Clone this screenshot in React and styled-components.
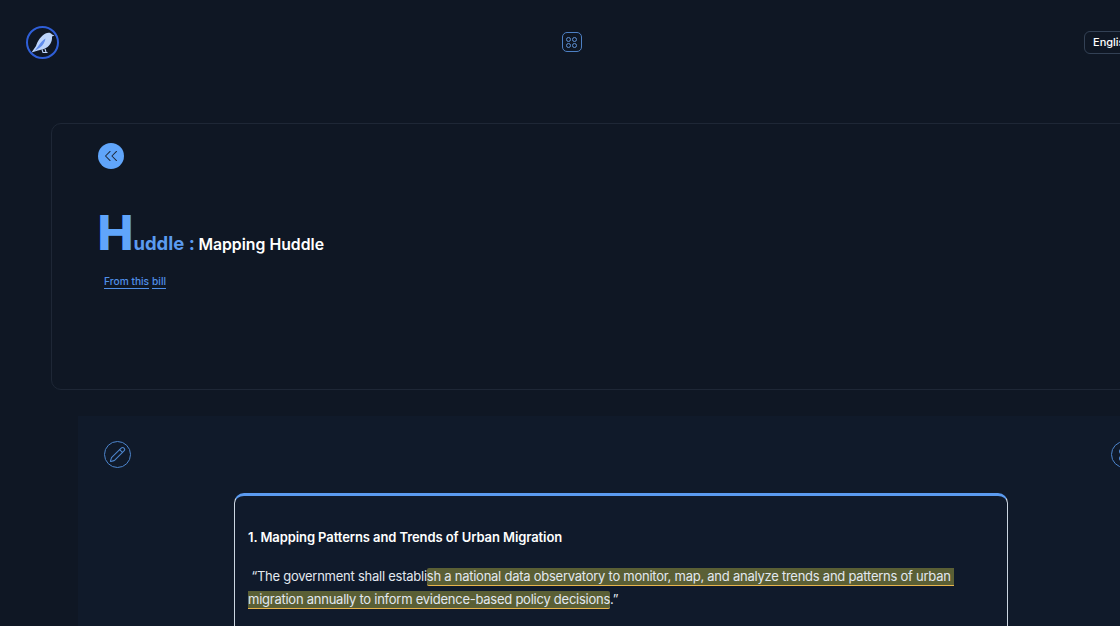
import styled, { createGlobalStyle } from "styled-components";
import { ChevronsLeft, Pencil } from "lucide-react";

const GlobalStyle = createGlobalStyle`
html, body {
  margin: 0;
  height: 100%;
  overflow: hidden;
  background: #0f1724;
}
* {
  box-sizing: border-box;
}
`;

const Page = styled.div`
width: 1242px;
height: 626px;
overflow: hidden;
background: #0f1724;
font-family: Inter, "Liberation Sans", sans-serif;
color: #fff;
`;

const Header = styled.header`
width: 1174px;
height: 84px;
padding: 26px 26px 0;
display: flex;
justify-content: space-between;
align-items: flex-start;
`;

const Logo = styled.svg`
width: 33px;
height: 33px;
display: block;
`;

const AppsButton = styled.div`
width: 20px;
height: 20px;
margin-top: 6px;
border: 1.5px solid #4d80c4;
border-radius: 5px;
display: grid;
grid-template-columns: 5px 5px;
grid-template-rows: 5px 5px;
gap: 1px;
place-content: center;
`;

const AppsDot = styled.span`
border: 1.25px solid #5d8fd3;
border-radius: 50%;
`;

const LangButton = styled.div`
width: 64px;
height: 23px;
margin-top: 5px;
padding-left: 8px;
border: 1px solid #334155;
border-radius: 6px;
font-size: 11px;
font-weight: 500;
line-height: 21px;
white-space: nowrap;
`;

const TopCard = styled.section`
margin: 39px 51px 0;
height: 267px;
padding: 19px 45.5px;
border: 1px solid #1e2736;
border-radius: 10px;
`;

const BackButton = styled.div`
width: 26px;
height: 26px;
border-radius: 50%;
background: #60a5fa;
color: #1e293b;
display: flex;
align-items: center;
justify-content: center;
`;

const Title = styled.h1`
margin: 40px 0 0;
height: 48px;
display: flex;
align-items: baseline;
font-weight: 700;
line-height: 48px;
`;

const BigLetter = styled.span`
font-size: 48px;
font-weight: 800;
color: #60a5fa;
`;

const TitleRest = styled.span`
font-size: 18.5px;
color: #5b9bf0;
margin-right: 3.5px;
`;

const TitleName = styled.span`
font-size: 15.8px;
font-weight: 600;
color: #fff;
`;

const Links = styled.div`
margin: 17px 0 0 6.5px;
display: flex;
gap: 3px;
`;

const BillLink = styled.a`
font-size: 10.2px;
font-weight: 500;
line-height: 14px;
color: #4f8fe8;
border-bottom: 1px solid #4f8fe8;
`;

const Section = styled.section`
margin: 26px 78px 0;
height: 300px;
padding: 25px 26px 0;
background: #101a2a;
`;

const ToolRow = styled.div`
display: flex;
justify-content: space-between;
`;

const RoundIcon = styled.div`
width: 27px;
height: 27px;
border: 1.5px solid #4d85cc;
border-radius: 50%;
color: #4d85cc;
display: flex;
align-items: center;
justify-content: center;
`;

const DotGrid = styled.div`
display: grid;
grid-template-columns: 5px 5px;
grid-template-rows: 5px 5px;
gap: 2px;
`;

const Dot = styled.span`
border-radius: 50%;
background: #4d85cc;
`;

const NoteBox = styled.article`
width: 774px;
height: 300px;
margin: 25px 0 0 130px;
padding: 32px 13px 0 13px;
background: #101a2b;
border: 1px solid #cbd5e1;
border-top: 3px solid #5b9bf0;
border-radius: 10px;
`;

const NoteTitle = styled.h3`
margin: 0;
font-size: 13px;
font-weight: 600;
line-height: 18px;
letter-spacing: -0.09px;
color: #fff;
`;

const NoteText = styled.p`
margin: 19px 0 0;
font-size: 13px;
line-height: 23px;
letter-spacing: -0.25px;
color: #e2e8f0;
`;

const Highlight = styled.mark`
background: #5a5f35;
color: #e2e8f0;
padding-bottom: 1px;
border-bottom: 1.5px solid #e8b44c;
border-radius: 2px;
white-space: break-spaces;
`;

const App = () => {
  return (
    <Page>
      <GlobalStyle />
      <Header>
        <Logo viewBox="0 0 33 33">
          <circle cx="16.5" cy="16.5" r="15.5" fill="#0f1724" stroke="#2f5fd8" strokeWidth="2" />
          <path
            d="M5.5 26.5 L10 20 C11.5 15 15 10 19.5 7.5 C22 6 25 6.5 26 8.5 L28.5 9.5 L26 10.5 C26.5 16 23.5 21 18 23 L12 24.5 Z"
            fill="#bcd4fb"
          />
          <path d="M8.5 25 L13 19 C15 16 17 14 19.5 12.5 C19 16 17 19.5 14 21.5 Z" fill="#5f8cec" />
          <path d="M16 23.5 L17 26.5 L21.5 26.5 M19 23 L20 26" fill="none" stroke="#bcd4fb" strokeWidth="1.1" />
        </Logo>
        <AppsButton>
          <AppsDot />
          <AppsDot />
          <AppsDot />
          <AppsDot />
        </AppsButton>
        <LangButton>English</LangButton>
      </Header>
      <TopCard>
        <BackButton>
          <ChevronsLeft size={22} strokeWidth={1.1} />
        </BackButton>
        <Title>
          <BigLetter>H</BigLetter>
          <TitleRest>uddle :</TitleRest>
          <TitleName>Mapping Huddle</TitleName>
        </Title>
        <Links>
          <BillLink>From this</BillLink>
          <BillLink>bill</BillLink>
        </Links>
      </TopCard>
      <Section>
        <ToolRow>
          <RoundIcon>
            <Pencil size={17} strokeWidth={1.5} />
          </RoundIcon>
          <RoundIcon>
            <DotGrid>
              <Dot />
              <Dot />
              <Dot />
              <Dot />
            </DotGrid>
          </RoundIcon>
        </ToolRow>
        <NoteBox>
          <NoteTitle>1. Mapping Patterns and Trends of Urban Migration</NoteTitle>
          <NoteText>
            &nbsp;“The government shall establi
            <Highlight>
              sh a national data observatory to monitor, map, and analyze trends and patterns of urban migration annually to inform evidence-based policy decisions
            </Highlight>
            .”
          </NoteText>
        </NoteBox>
      </Section>
    </Page>
  );
};

export default App;
